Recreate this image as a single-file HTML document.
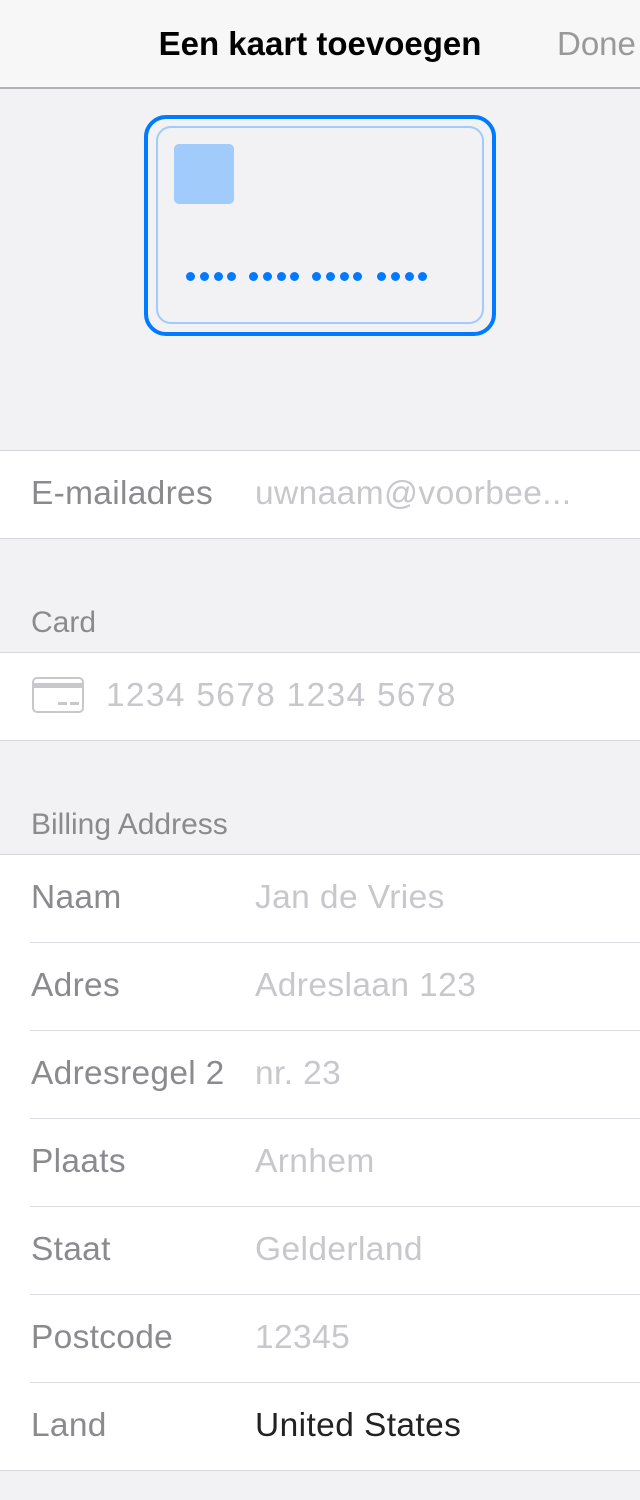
<!DOCTYPE html>
<html><head><meta charset="utf-8"><style>
*{margin:0;padding:0;box-sizing:border-box}
body{width:640px;height:1500px;background:#f2f2f4;font-family:"Liberation Sans",sans-serif;position:relative;overflow:hidden}
.nav{position:absolute;left:0;top:0;width:640px;height:89px;background:#f7f7f7;border-bottom:2px solid #b2b2b2}
.title{position:absolute;left:0;width:640px;top:25px;text-align:center;font-size:33px;font-weight:bold;color:#000}
.done{position:absolute;left:557px;top:25px;font-size:33px;color:#999;white-space:nowrap}
.card{position:absolute;left:144px;top:115px;width:352px;height:221px;border:4px solid #007aff;border-radius:22px}
.inner{position:absolute;left:156px;top:126px;width:328px;height:198px;border:2px solid #a0cbfa;border-radius:15px}
.chip{position:absolute;left:174px;top:144px;width:60px;height:60px;background:#a0cbfa;border-radius:5px}
.dots{position:absolute;top:272px;left:186px;height:9px}
.dots i{position:absolute;top:0;width:9px;height:9px;border-radius:50%;background:#007aff}
.sec{position:absolute;left:0;width:640px;background:#fff;border-top:1px solid #d8d8dc;border-bottom:1px solid #d8d8dc}
.row{position:absolute;left:0;width:640px;height:88px}
.row .l{position:absolute;left:31px;top:24px;font-size:33.5px;color:#8a8a8f;letter-spacing:0.3px}
.row .v{position:absolute;left:255px;top:24px;font-size:33.5px;color:#c7c7cc;white-space:nowrap;letter-spacing:0.4px}
.sep{position:absolute;left:30px;right:0;height:1px;background:#dcdce0}
.hdr{position:absolute;left:31px;font-size:30px;color:#8a8a8f}
</style></head><body>
<div class="nav"><div class="title">Een kaart toevoegen</div><div class="done">Done</div></div>
<div class="card"></div><div class="inner"></div><div class="chip"></div>
<div class="dots">
<i style="left:0"></i><i style="left:14px"></i><i style="left:28px"></i><i style="left:41px"></i>
<i style="left:63px"></i><i style="left:77px"></i><i style="left:91px"></i><i style="left:104px"></i>
<i style="left:126px"></i><i style="left:140px"></i><i style="left:154px"></i><i style="left:167px"></i>
<i style="left:191px"></i><i style="left:205px"></i><i style="left:219px"></i><i style="left:232px"></i>
</div>
<div class="sec" style="top:450px;height:89px"><div class="row" style="top:0"><div class="l">E-mailadres</div><div class="v">uwnaam@voorbee...</div></div></div>
<div class="hdr" style="top:606px">Card</div>
<div class="sec" style="top:652px;height:89px">
<svg style="position:absolute;left:32px;top:24px" width="52" height="36" viewBox="0 0 52 36"><rect x="1" y="1" width="50" height="34" rx="4" fill="none" stroke="#c8c8cc" stroke-width="2"/><rect x="1" y="6" width="50" height="5" fill="#c8c8cc"/><rect x="26" y="25" width="9" height="3" fill="#c8c8cc"/><rect x="38" y="25" width="9" height="3" fill="#c8c8cc"/></svg>
<div class="row"><div class="v" style="left:106px;letter-spacing:1.3px">1234 5678 1234 5678</div></div></div>
<div class="hdr" style="top:808px">Billing Address</div>
<div class="sec" style="top:854px;height:617px">
<div class="row" style="top:0"><div class="l">Naam</div><div class="v">Jan de Vries</div></div>
<div class="sep" style="top:87px"></div>
<div class="row" style="top:88px"><div class="l">Adres</div><div class="v">Adreslaan 123</div></div>
<div class="sep" style="top:175px"></div>
<div class="row" style="top:176px"><div class="l">Adresregel 2</div><div class="v">nr. 23</div></div>
<div class="sep" style="top:263px"></div>
<div class="row" style="top:264px"><div class="l">Plaats</div><div class="v">Arnhem</div></div>
<div class="sep" style="top:351px"></div>
<div class="row" style="top:352px"><div class="l">Staat</div><div class="v">Gelderland</div></div>
<div class="sep" style="top:439px"></div>
<div class="row" style="top:440px"><div class="l">Postcode</div><div class="v">12345</div></div>
<div class="sep" style="top:527px"></div>
<div class="row" style="top:528px"><div class="l">Land</div><div class="v" style="color:#222">United States</div></div>
</div>
</body></html>
